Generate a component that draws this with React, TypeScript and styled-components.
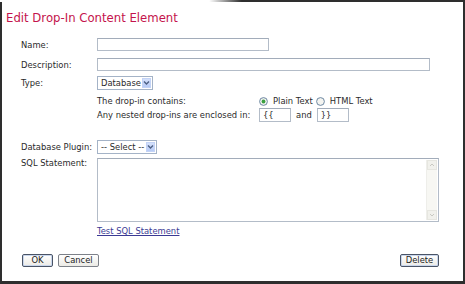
import React from "react";
import styled, { createGlobalStyle } from "styled-components";

const GlobalStyle = createGlobalStyle`
  html, body {
    margin: 0;
    padding: 0;
    background: #ffffff;
  }
  body {
    font-family: "DejaVu Sans", Verdana, sans-serif;
    font-size: 8.4px;
    color: #2a2a2a;
  }
`;

const Panel = styled.div`
  position: relative;
  box-sizing: border-box;
  width: 465px;
  height: 284px;
  background: #ffffff;
  border-left: 2px solid #2e2e2e;
  border-right: 2px solid #2e2e2e;
  border-bottom: 3px solid #2e2e2e;
  display: flex;
  flex-direction: column;

  //the top edge of the frame fades out to the left
  &::before {
    content: "";
    position: absolute;
    top: 0;
    left: -2px;
    right: -2px;
    height: 2px;
    background: linear-gradient(to right, #ffffff 0, #ffffff 45%, #2e2e2e 52%);
  }
`;

const Title = styled.h1`
  margin: 0;
  padding: 11px 0 0 4px;
  font-family: "DejaVu Sans", Verdana, sans-serif;
  font-weight: normal;
  font-size: 11.7px;
  line-height: 14px;
  color: #c4134c;
`;

const Form = styled.div`
  display: flex;
  flex-direction: column;
  padding: 13px 0 0 19px;
`;

const Row = styled.div<{ $mt?: number; $h?: number; $top?: boolean }>`
  display: grid;
  grid-template-columns: 76px 1fr;
  align-items: ${(p) => (p.$top ? "start" : "center")};
  margin-top: ${(p) => p.$mt ?? 0}px;
  height: ${(p) => (p.$h ? `${p.$h}px` : "auto")};
`;

const Label = styled.label`
  line-height: 10px;
  white-space: nowrap;
`;

const SubRow = styled.div`
  display: grid;
  grid-template-columns: 162px 1fr;
  align-items: center;
  white-space: nowrap;
`;

const Inline = styled.div`
  display: flex;
  align-items: center;
`;

const TextInput = styled.input<{ $w: number }>`
  box-sizing: border-box;
  width: ${(p) => p.$w}px;
  height: 100%;
  margin: 0;
  padding: 0 3px;
  border: 1px solid #b3bcc8;
  border-top-color: #a2acba;
  background: #ffffff;
  font-family: "DejaVu Sans", Verdana, sans-serif;
  font-size: 8.4px;
  color: #2a2a2a;
  outline: none;
`;

const SelectBox = styled.div<{ $w: number }>`
  box-sizing: border-box;
  display: flex;
  align-items: center;
  justify-content: space-between;
  width: ${(p) => p.$w}px;
  height: 100%;
  border: 1px solid #a4b3c7;
  background: #ffffff;
  padding: 0 1px 0 3px;
`;

const SelectText = styled.span`
  line-height: 10px;
`;

const ArrowButton = styled.span`
  display: flex;
  align-items: center;
  justify-content: center;
  width: 9px;
  height: 10px;
  background: linear-gradient(#d4e0fb, #b7cbf6);
  border: 1px solid #c3d3f6;
  box-sizing: border-box;
`;

const RadioGroup = styled.div`
  display: flex;
  align-items: center;
`;

const RadioItem = styled.label`
  display: flex;
  align-items: center;
  gap: 5px;
  margin-right: 3px;
`;

const SmallText = styled.span<{ $mx?: number }>`
  margin: 0 ${(p) => p.$mx ?? 0}px;
`;

const AreaBox = styled.div`
  box-sizing: border-box;
  display: flex;
  width: 342px;
  height: 64px;
  border: 1px solid #b3bcc8;
  border-top-color: #a2acba;
  background: #ffffff;
`;

const Area = styled.textarea`
  flex: 1;
  border: none;
  margin: 0;
  padding: 2px 3px;
  resize: none;
  outline: none;
  font-family: "DejaVu Sans", Verdana, sans-serif;
  font-size: 8.4px;
`;

const ScrollBar = styled.div`
  display: flex;
  flex-direction: column;
  justify-content: space-between;
  width: 10px;
  margin: 1px 1px 1px 0;
  background: #f7f7f3;
  border-left: 1px solid #eeeeea;
`;

const ScrollButton = styled.div`
  display: flex;
  align-items: center;
  justify-content: center;
  height: 10px;
  background: #f1f1ec;
  border: 1px solid #e6e6e0;
  box-sizing: border-box;
`;

const Link = styled.a`
  color: #3a3a94;
  text-decoration: underline;
  line-height: 11px;
  cursor: pointer;
`;

const ButtonBar = styled.div`
  display: flex;
  align-items: center;
  justify-content: space-between;
  margin-top: 17px;
  padding: 0 24px 0 2px;
`;

const ButtonGroup = styled.div`
  display: flex;
  gap: 5px;
`;

const Button = styled.button<{ $w: number; $strong?: boolean }>`
  box-sizing: border-box;
  width: ${(p) => p.$w}px;
  height: 13px;
  margin: 0;
  padding: 0;
  border: 1px solid ${(p) => (p.$strong ? "#4a5466" : "#7d8189")};
  border-radius: 2px;
  background: linear-gradient(#ffffff, #ecebe6);
  box-shadow: ${(p) => (p.$strong ? "inset 0 0 0 1px #c9d6ec" : "none")};
  font-family: "DejaVu Sans", Verdana, sans-serif;
  font-size: 8.4px;
  line-height: 11px;
  color: #222222;
`;

const Chevron = () => (
  <svg width="7" height="6" viewBox="0 0 7 6">
    <path d="M1 1.5 L3.5 4 L6 1.5" fill="none" stroke="#4d6185" strokeWidth="1.4" />
  </svg>
);

const Radio = ({ checked }: { checked?: boolean }) => (
  <svg width="9" height="9" viewBox="0 0 9 9">
    <circle cx="4.5" cy="4.5" r="3.9" fill="#f4f4f0" stroke="#5d7c9a" strokeWidth="0.9" />
    {checked && <circle cx="4.5" cy="4.5" r="1.9" fill="#3aa040" />}
  </svg>
);

const ScrollArrow = ({ up }: { up?: boolean }) => (
  <svg width="6" height="4" viewBox="0 0 6 4">
    <path
      d={up ? "M1 3 L3 1 L5 3" : "M1 1 L3 3 L5 1"}
      fill="none"
      stroke="#c9c9c2"
      strokeWidth="1"
    />
  </svg>
);

export default function App() {
  return (
    <>
      <GlobalStyle />
      <Panel>
        <Title>Edit Drop-In Content Element</Title>
        <Form>
          <Row $h={13}>
            <Label>Name:</Label>
            <TextInput $w={172} />
          </Row>
          <Row $h={13} $mt={7}>
            <Label>Description:</Label>
            <TextInput $w={333} />
          </Row>
          <Row $h={14} $mt={5}>
            <Label>Type:</Label>
            <SelectBox $w={56}>
              <SelectText>Database</SelectText>
              <ArrowButton>
                <Chevron />
              </ArrowButton>
            </SelectBox>
          </Row>
          <Row $h={12} $mt={5}>
            <span />
            <SubRow>
              <span>The drop-in contains:</span>
              <RadioGroup>
                <RadioItem>
                  <Radio checked />
                  Plain Text
                </RadioItem>
                <RadioItem>
                  <Radio />
                  HTML Text
                </RadioItem>
              </RadioGroup>
            </SubRow>
          </Row>
          <Row $h={14} $mt={1}>
            <span />
            <SubRow>
              <span>Any nested drop-ins are enclosed in:</span>
              <Inline>
                <TextInput $w={32} defaultValue="{{" style={{ height: 14 }} />
                <SmallText $mx={5}>and</SmallText>
                <TextInput $w={32} defaultValue="}}" style={{ height: 14 }} />
              </Inline>
            </SubRow>
          </Row>
          <Row $h={14} $mt={18}>
            <Label>Database Plugin:</Label>
            <SelectBox $w={60}>
              <SelectText>-- Select --</SelectText>
              <ArrowButton>
                <Chevron />
              </ArrowButton>
            </SelectBox>
          </Row>
          <Row $mt={4} $top>
            <Label>SQL Statement:</Label>
            <AreaBox>
              <Area />
              <ScrollBar>
                <ScrollButton>
                  <ScrollArrow up />
                </ScrollButton>
                <ScrollButton>
                  <ScrollArrow />
                </ScrollButton>
              </ScrollBar>
            </AreaBox>
          </Row>
          <Row $mt={4} $h={11}>
            <span />
            <Link>Test SQL Statement</Link>
          </Row>
        </Form>
        <ButtonBar>
          <ButtonGroup>
            <Button $w={31} $strong style={{ marginLeft: 18 }}>
              OK
            </Button>
            <Button $w={41}>Cancel</Button>
          </ButtonGroup>
          <Button $w={39} $strong>
            Delete
          </Button>
        </ButtonBar>
      </Panel>
    </>
  );
}
